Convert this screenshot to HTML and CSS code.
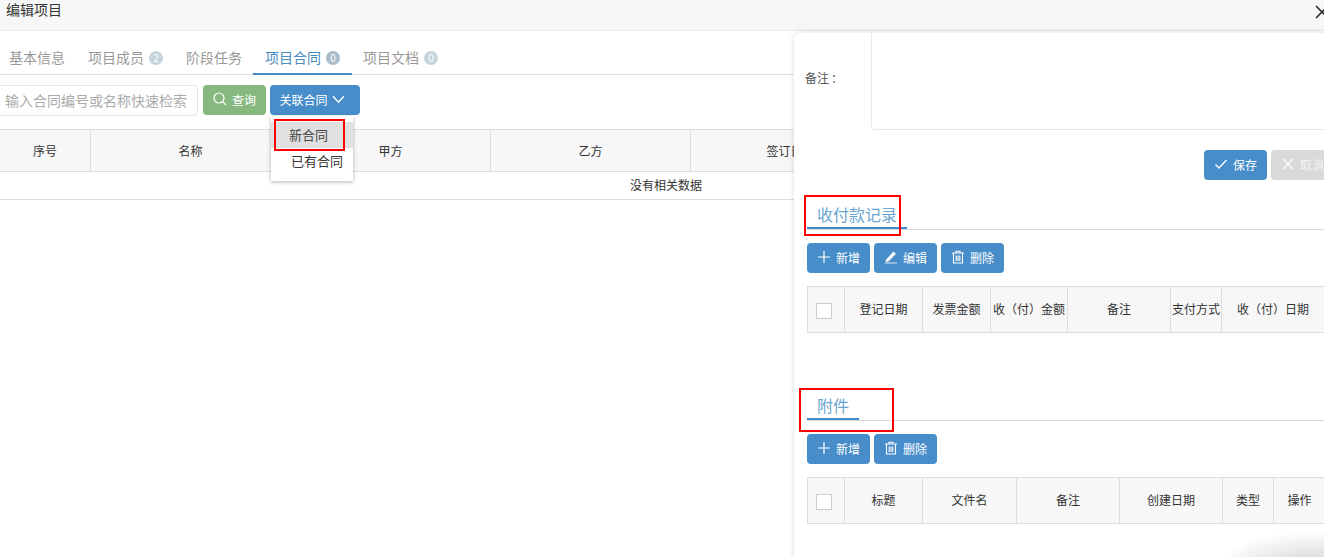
FILE: index.html
```html
<!DOCTYPE html>
<html lang="zh">
<head>
<meta charset="utf-8">
<title>编辑项目</title>
<link rel="stylesheet" href="styles.css">
</head>
<body>
<div class="modal">
  <header class="modal-head">
    <h1 class="modal-title">编辑项目</h1>
    <svg class="close-icon" viewBox="0 0 14 14"><path d="M1 1l12 12M13 1L1 13" stroke="#333" stroke-width="1.6" fill="none"/></svg>
  </header>
  <nav class="tabs">
    <a class="tab">基本信息</a>
    <a class="tab">项目成员<span class="badge badge-light">2</span></a>
    <a class="tab">阶段任务</a>
    <a class="tab tab-active">项目合同<span class="badge">0</span></a>
    <a class="tab">项目文档<span class="badge badge-light">0</span></a>
  </nav>
  <div class="toolbar">
    <div class="search-input">输入合同编号或名称快速检索</div>
    <button class="btn btn-green">
      <svg class="icon" viewBox="0 0 14 14"><circle cx="6" cy="6" r="5" fill="none" stroke="#fff" stroke-width="1.2"/><path d="M9.6 9.6L13 13" stroke="#fff" stroke-width="1.2"/></svg>查询
    </button>
    <button class="btn btn-blue btn-link">关联合同
      <svg class="icon chevron" viewBox="0 0 12 8"><path d="M1 1l5 5.5L11 1" fill="none" stroke="#fff" stroke-width="1.3"/></svg>
    </button>
  </div>
  <div class="dropdown">
    <div class="dropdown-item dropdown-item-hover">新合同</div>
    <div class="dropdown-item dropdown-item-plain">已有合同</div>
    <div class="mark mark-new"></div>
  </div>
  <div class="contract-table">
    <div class="thead">
      <div class="th th-seq">序号</div>
      <div class="th th-name">名称</div>
      <div class="th th-party">甲方</div>
      <div class="th th-party">乙方</div>
      <div class="th th-party">签订日期</div>
      <div class="th th-rest"></div>
    </div>
    <div class="empty-row">没有相关数据</div>
  </div>

  <aside class="panel">
    <div class="remark-row">
      <label class="remark-label">备注<span class="remark-colon">：</span></label>
      <div class="remark-box"></div>
    </div>
    <div class="form-actions">
      <button class="btn btn-blue btn-sm">
        <svg class="icon" viewBox="0 0 14 14"><path d="M1.5 7.5l3.5 3.5 7.5-8" fill="none" stroke="#fff" stroke-width="1.4"/></svg>保存
      </button>
      <button class="btn btn-grey btn-sm">
        <svg class="icon" viewBox="0 0 14 14"><path d="M2 2l10 10M12 2L2 12" fill="none" stroke="#fff" stroke-width="1.2"/></svg>取消
      </button>
    </div>

    <section class="section section-pay">
      <div class="section-head"><span class="section-title title-pay">收付款记录</span></div>
      <div class="mark mark-pay"></div>
      <div class="btn-row">
        <button class="btn btn-blue btn-sm"><svg class="icon" viewBox="0 0 14 14"><path d="M7 1v12M1 7h12" stroke="#fff" stroke-width="1.2"/></svg>新增</button>
        <button class="btn btn-blue btn-sm"><svg class="icon" viewBox="0 0 14 14"><path d="M2.5 9.5L9.5 2l2 1.8-7 7.2-2.6.6zM1 13h12" fill="#fff" stroke="#fff" stroke-width=".8"/></svg>编辑</button>
        <button class="btn btn-blue btn-sm"><svg class="icon" viewBox="0 0 14 14"><path d="M1 3h12M5 3V1.2h4V3M2.5 3v10h9V3M5.2 5.5v5.5M7 5.5v5.5M8.8 5.5v5.5" fill="none" stroke="#fff" stroke-width="1.1"/></svg>删除</button>
      </div>
      <div class="grid grid-pay">
        <div class="cell cell-check"><span class="check"></span></div>
        <div class="cell">登记日期</div>
        <div class="cell">发票金额</div>
        <div class="cell">收（付）金额</div>
        <div class="cell">备注</div>
        <div class="cell">支付方式</div>
        <div class="cell">收（付）日期</div>
        <div class="cell"></div>
      </div>
    </section>

    <section class="section section-attach">
      <div class="section-head"><span class="section-title title-attach">附件</span></div>
      <div class="mark mark-attach"></div>
      <div class="btn-row">
        <button class="btn btn-blue btn-sm"><svg class="icon" viewBox="0 0 14 14"><path d="M7 1v12M1 7h12" stroke="#fff" stroke-width="1.2"/></svg>新增</button>
        <button class="btn btn-blue btn-sm"><svg class="icon" viewBox="0 0 14 14"><path d="M1 3h12M5 3V1.2h4V3M2.5 3v10h9V3M5.2 5.5v5.5M7 5.5v5.5M8.8 5.5v5.5" fill="none" stroke="#fff" stroke-width="1.1"/></svg>删除</button>
      </div>
      <div class="grid grid-attach">
        <div class="cell cell-check"><span class="check"></span></div>
        <div class="cell">标题</div>
        <div class="cell">文件名</div>
        <div class="cell">备注</div>
        <div class="cell">创建日期</div>
        <div class="cell">类型</div>
        <div class="cell">操作</div>
        <div class="cell"></div>
      </div>
    </section>
    <div class="corner-shade"></div>
  </aside>
</div>
</body>
</html>
```
FILE: styles.css
```css
* { box-sizing: border-box; }
html, body { margin: 0; height: 100%; overflow: hidden; background: #fff; }
body { font-family: "Noto Sans CJK SC", "Liberation Sans", sans-serif; color: #333; font-size: 12px; }
button { font-family: inherit; }

.modal { position: relative; width: 1324px; height: 557px; overflow: hidden; }

.modal-head { height: 31px; background: #f7f7f7; border-bottom: 1px solid #e8e8e8; display: flex; justify-content: space-between; padding: 0 0 0 6px; }
.modal-title { margin: 0; font-size: 14px; font-weight: 400; line-height: 18px; color: #333; }
.close-icon { width: 14px; height: 14px; margin: 5px -5px 0 0; }

.tabs { display: flex; height: 44px; margin-left: -3px; padding-top: 13px; border-bottom: 1px solid #ddd; width: 1324px; }
.tab { padding: 0 12px; height: 31px; line-height: 26px; font-size: 14px; color: #999; margin-right: -1px; white-space: nowrap; display: flex; align-items: flex-start; }
.tab-active { color: #4a8dbf; border-bottom: 2px solid #428bca; }
.badge { width: 14px; height: 14px; margin: 7px 0 0 5px; border-radius: 50%; background: #a9bccb; color: #fff; font-size: 10px; line-height: 14px; text-align: center; }
.badge-light { background: #c6d4de; }

.toolbar { display: flex; align-items: flex-start; gap: 4px; height: 54px; padding-top: 10px; margin-left: -6px; }
.search-input { width: 204px; height: 31px; margin-right: 1px; border: 1px solid #e0e6eb; border-radius: 4px; padding-left: 10px; font-size: 14px; line-height: 28px; color: #aaa; white-space: nowrap; overflow: hidden; }

.btn { display: inline-flex; flex-shrink: 0; align-items: center; justify-content: center; height: 30px; border: 0; border-radius: 4px; font-size: 12px; color: #fff; padding: 0 0 2px; white-space: nowrap; }
.btn-green { width: 63px; background: #87b87f; }
.btn-blue { background: #478dc9; }
.btn-link { width: 90px; padding-right: 6px; }
.btn-sm { width: 63px; }
.btn-grey { background: #d9d9d9; color: #f4f4f4; justify-content: flex-start; padding-left: 10px; }
.icon { width: 14px; height: 14px; margin-right: 5px; }
.chevron { width: 13px; height: 9px; margin: 0 0 0 4px; }

.dropdown { position: absolute; left: 271px; top: 116px; width: 82px; height: 65px; background: #fff; box-shadow: 0 1px 4px rgba(0,0,0,.3); z-index: 5; padding-top: 6px; }
.dropdown-item { height: 26px; line-height: 26px; font-size: 13px; color: #333; white-space: nowrap; }
.dropdown-item-hover { background: #e0e0e0; padding-left: 18px; color: #444; }
.dropdown-item-plain { padding-left: 20px; }

.mark { position: absolute; border: 2px solid #f00; z-index: 6; pointer-events: none; }
.mark-new { left: 3px; top: 3px; width: 71px; height: 32px; }

.contract-table { width: 1324px; }
.thead { display: flex; height: 43px; background: #f7f7f7; border-top: 1px solid #ddd; border-bottom: 1px solid #ddd; }
.th { display: flex; align-items: center; justify-content: center; border-right: 1px solid #ddd; color: #333; }
.th-seq { width: 91px; }
.th-name { width: 200px; }
.th-party { width: 200px; }
.th-rest { flex: 1; }
.empty-row { height: 28px; line-height: 26px; text-align: center; border-bottom: 1px solid #ddd; padding-left: 8px; color: #333; width: 1324px; }

.panel { position: absolute; left: 794px; top: 33px; width: 560px; height: 540px; background: #fff; border-radius: 6px 0 0 0; box-shadow: 0 0 6px rgba(0,0,0,.14); overflow: hidden; z-index: 3; }

.remark-row { display: flex; height: 97px; }
.remark-label { width: 77px; padding: 36px 0 0 11px; font-size: 12px; line-height: 18px; color: #555; }
.remark-colon { margin-left: 2px; }
.remark-box { flex: 1; border-left: 1px solid #e4e9ea; border-bottom: 1px solid #e4e9ea; border-radius: 0 0 0 4px; }

.form-actions { display: flex; gap: 4px; padding: 20px 0 0 410px; height: 63px; }

.section { position: relative; padding-left: 13px; }
.section-head { border-bottom: 1px solid #d8d8d8; height: 37px; display: flex; align-items: flex-end; }
.section-title { display: block; font-size: 16px; line-height: 22px; color: #6ba4cf; border-bottom: 2px solid #428bca; padding: 0 0 0 10px; height: 26px; white-space: nowrap; }
.title-pay { width: 100px; }
.title-attach { width: 52px; }
.section-pay { height: 191px; }
.section-attach { height: 170px; }

.mark-pay { left: 10px; top: 2px; width: 97px; height: 41px; }
.mark-attach { left: 5px; top: 4px; width: 95px; height: 44px; }

.btn-row { display: flex; gap: 4px; padding-top: 13px; height: 56px; }

.grid { display: grid; height: 47px; width: 540px; border: 1px solid #ddd; border-width: 1px 0 1px 1px; background: #f7f7f7; }
.grid-pay { grid-template-columns: 37px 78px 68px 77px 103px 51px 103px 1fr; }
.grid-attach { grid-template-columns: 37px 78px 94px 103px 103px 51px 52px 1fr; }
.cell { display: flex; align-items: center; justify-content: center; border-right: 1px solid #ddd; white-space: nowrap; color: #333; padding-bottom: 2px; }
.cell-check { padding-right: 4px; }
.cell:last-child { border-right: 0; }
.check { width: 16px; height: 16px; background: #fff; border: 1px solid #ccc; margin-top: 4px; }

.corner-shade { position: absolute; left: 410px; top: 490px; width: 120px; height: 34px; background: radial-gradient(ellipse 105px 42px at 112px 50px, rgba(0,0,0,.2), rgba(0,0,0,0)); }
```
